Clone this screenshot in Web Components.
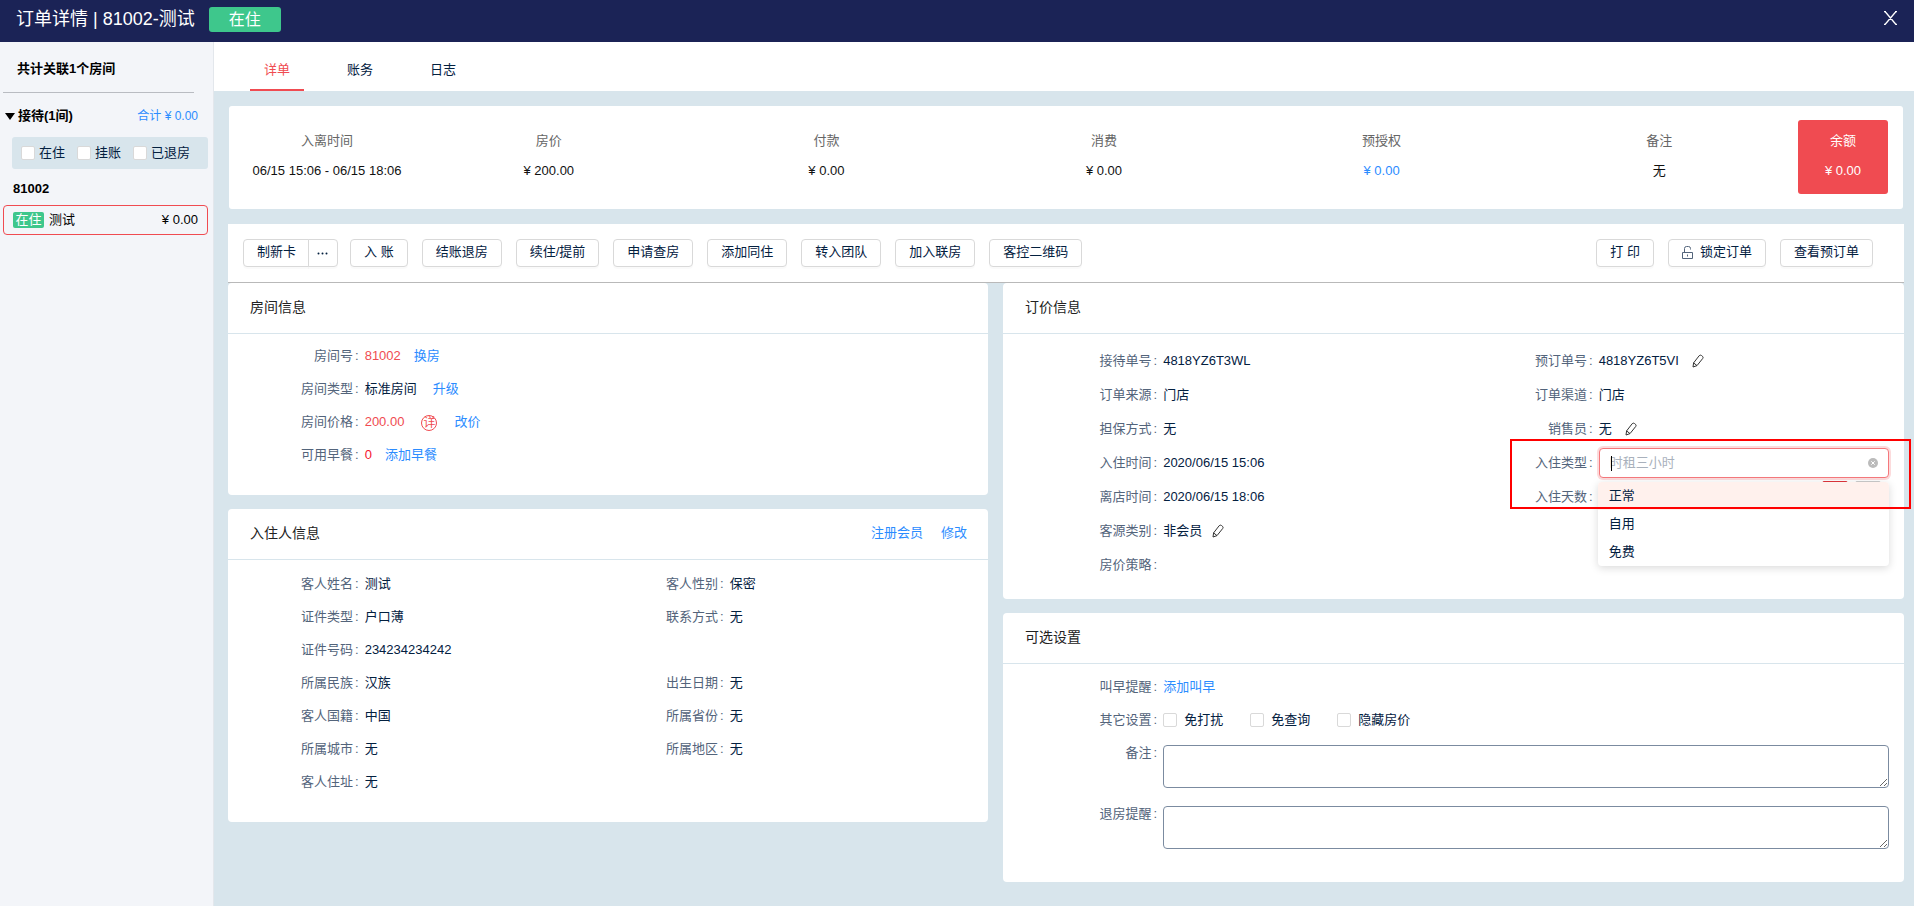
<!DOCTYPE html>
<html lang="zh-CN">
<head>
<meta charset="utf-8">
<meta name="viewport" content="width=device-width, initial-scale=1">
<title>订单详情</title>
<style>
html {
  --navy: #1b2356;
  --red: #f04b51;
  --green: #3ec78c;
  --blue: #2b8cff;
  --ink: #03203f;
  --label: #53647b;
  --pale: #d8e5ec;
  --side: #f3f5f9;
}
body {
  margin: 0;
  font: 13px/20px "Liberation Sans", "Noto Sans CJK SC", sans-serif;
  color: var(--ink);
}
</style>
</head>
<body>
<order-page></order-page>
<script>
const BASE = `
  *, *::before, *::after { box-sizing: border-box; }
  a { color: var(--blue); text-decoration: none; white-space: nowrap; }
  button { font: inherit; color: inherit; margin: 0; cursor: pointer; }
  input[type=checkbox] {
    appearance: none; flex: none; width: 14px; height: 14px; margin: 0;
    background: #fff; border: 1px solid #d9d9d9; border-radius: 2px;
  }
`;
function define(tag, css, html) {
  const tpl = document.createElement('template');
  tpl.innerHTML = `<style>${BASE}${css}</style>${html}`;
  customElements.define(tag, class extends HTMLElement {
    constructor() {
      super();
      this.attachShadow({ mode: 'open' }).append(tpl.content.cloneNode(true));
    }
  });
}

/* ---------- top bar ---------- */
define('order-header', `
  :host { display: flex; align-items: center; height: 42px; padding: 0 17px 0 16px; background: var(--navy); color: #fff; }
  h1 { margin: 0; font-size: 18px; font-weight: 400; line-height: 38px; padding-bottom: 4px; white-space: nowrap; }
  span { margin: 0 auto 3px 14px; width: 72px; font-size: 16px; line-height: 25px; text-align: center; background: var(--green); border-radius: 3px; }
  button { display: flex; padding: 0; margin-bottom: 6px; background: none; border: 0; }
`, `
  <h1>订单详情 | 81002-测试</h1>
  <span>在住</span>
  <button type="button" aria-label="关闭"><svg width="13" height="14" viewBox="0 0 13 14"><path d="M1 .5 12 13.500M12 .5 1 13.500M0 .5H2M11 .5H13M0 13.500H2M11 13.500H13" fill="none" stroke="#fff" stroke-width="1.300"/></svg></button>
`);

/* ---------- related rooms ---------- */
define('room-sidebar', `
  :host { display: block; width: 214px; flex: none; background: var(--side); border-right: 1px solid #e3e7ec; color: #000; }
  h2 { margin: 0 19px 0 3px; padding: 3px 14px 0; font-size: 13px; line-height: 47px; border-bottom: 1px solid #b9bcc2; }
  .group { display: flex; align-items: center; padding: 2px 15px 0 5px; height: 44px; }
  .group b { flex: 1; margin-left: 3px; }
  .group span { font-size: 12px; color: var(--blue); }
  .filter { display: flex; align-items: center; gap: 12px; height: 32px; margin: 0 5px 0 12px; padding-left: 9px; background: var(--pale); border-radius: 3px; color: var(--ink); }
  .filter label { display: flex; align-items: center; gap: 4px; }
  h3 { margin: 0; padding: 2px 0 0 13px; font-size: 13px; height: 36px; line-height: 36px; }
  .guest { display: flex; align-items: center; height: 30px; margin: 0 5px 0 3px; padding: 0 9px; border: 1px solid var(--red); border-radius: 4px; }
  .guest em { font-style: normal; width: 31px; line-height: 16px; text-align: center; color: #fff; background: var(--green); border-radius: 2px; }
  .guest span { flex: 1; margin-left: 5px; }
`, `
  <h2>共计关联1个房间</h2>
  <div class="group">
    <svg width="10" height="7" viewBox="0 0 10 7"><path d="M0 0H10L5 7Z"/></svg>
    <b>接待(1间)</b><span>合计 ¥ 0.00</span>
  </div>
  <div class="filter">
    <label><input type="checkbox">在住</label>
    <label><input type="checkbox">挂账</label>
    <label><input type="checkbox">已退房</label>
  </div>
  <h3>81002</h3>
  <div class="guest"><em>在住</em><span>测试</span>¥ 0.00</div>
`);

/* ---------- tabs ---------- */
define('order-tabs', `
  :host { display: flex; gap: 29px; height: 49px; padding-left: 36px; background: #fff; }
  button { padding: 8px 14px 0; line-height: 38px; background: none; border: 0; border-bottom: 2px solid transparent; }
  [aria-selected=true] { color: var(--red); border-color: var(--red); }
`, `
  <button type="button" role="tab" aria-selected="true">详单</button>
  <button type="button" role="tab" aria-selected="false">账务</button>
  <button type="button" role="tab" aria-selected="false">日志</button>
`);

/* ---------- money summary ---------- */
define('order-summary', `
  :host { display: grid; grid-template-columns: 166px repeat(5, 1fr) 90px; margin: 0 1px; padding: 14px 15px 15px; background: #fff; border-radius: 3px; text-align: center; line-height: 30px; color: #111; }
  dl { margin: 0; padding: 6px 0 8px; white-space: nowrap; }
  dt { color: #666; }
  dd { margin: 0; }
  .balance, .balance dt { color: #fff; }
  .balance { background: var(--red); border-radius: 3px; }
`, `
  <dl><dt>入离时间</dt><dd>06/15 15:06 - 06/15 18:06</dd></dl>
  <dl><dt>房价</dt><dd>¥ 200.00</dd></dl>
  <dl><dt>付款</dt><dd>¥ 0.00</dd></dl>
  <dl><dt>消费</dt><dd>¥ 0.00</dd></dl>
  <dl><dt>预授权</dt><dd><a href="#">¥ 0.00</a></dd></dl>
  <dl><dt>备注</dt><dd>无</dd></dl>
  <dl class="balance"><dt>余额</dt><dd>¥ 0.00</dd></dl>
`);

/* ---------- actions ---------- */
define('order-actions', `
  :host { display: flex; align-items: center; gap: 14px; height: 59px; padding: 0 31px 0 15px; background: #fff; border-bottom: 1px solid #b9b9b9; }
  button { display: flex; align-items: center; justify-content: center; gap: 7px; height: 28px; padding: 0 13px 2px; background: #fff; border: 1px solid #d9d9d9; border-radius: 4px; box-shadow: 0 2px 0 rgba(0,0,0,.02); white-space: nowrap; }
  .pair { display: flex; margin-right: -2px; }
  .pair button:first-child { padding: 0 12px 2px 13px; border-radius: 4px 0 0 4px; }
  .pair button:last-child { border-radius: 0 4px 4px 0; margin-left: -1px; padding: 0 8px 0 7px; }
  .push { margin-left: auto; }
`, `
  <div class="pair">
    <button type="button">制新卡</button>
    <button type="button" aria-label="更多"><svg width="13" height="3" viewBox="0 0 13 3" fill="#03203f"><circle cx="2.500" cy="1.500" r="1"/><circle cx="6.500" cy="1.500" r="1"/><circle cx="10.500" cy="1.500" r="1"/></svg></button>
  </div>
  <button type="button">入 账</button>
  <button type="button">结账退房</button>
  <button type="button">续住/提前</button>
  <button type="button">申请查房</button>
  <button type="button">添加同住</button>
  <button type="button">转入团队</button>
  <button type="button">加入联房</button>
  <button type="button">客控二维码</button>
  <button type="button" class="push">打 印</button>
  <button type="button"><svg width="11" height="13" viewBox="0 0 11 13" fill="none" stroke="#53647b"><path d="M.5 6.500H10.500V12.500H.5ZM2.500 6.500V2.500Q2.500.5 4.500.5H6.500Q8.500.5 8.500 2.500V3.500M5.500 8.500V10.500"/></svg>锁定订单</button>
  <button type="button">查看预订单</button>
`);

/* ---------- white card with a titled head ---------- */
define('info-card', `
  :host { display: block; background: #fff; border-radius: 4px; }
  header { display: flex; align-items: center; height: 51px; padding: 0 21px 2px 22px; border-bottom: 1px solid var(--pale); }
  h2 { flex: 1; margin: 0; font-size: 14px; font-weight: 400; color: #222; }
  .extra { display: flex; gap: 18px; }
  .body { display: grid; grid-template-columns: 1fr 1fr; padding: var(--body-pad); }
`, `
  <header><h2><slot name="title"></slot></h2><div class="extra"><slot name="extra"></slot></div></header>
  <div class="body"><slot></slot></div>
`);

/* ---------- label and value pair ---------- */
define('form-field', `
  :host { display: grid; grid-template-columns: 1fr 2fr; align-items: center; min-height: var(--row, 33px); min-width: 0; }
  :host([full]) { grid-column: 1 / -1; grid-template-columns: 1fr 5fr; }
  :host([area]) { align-items: start; }
  :host([area]) .name { line-height: 34px; }
  .name { text-align: right; color: var(--label); white-space: nowrap; }
  .name::after { content: ":"; margin: 0 6px 0 2px; }
  .value { display: flex; align-items: center; gap: var(--gap, 13px); min-width: 0; white-space: nowrap; }
`, `
  <div class="name"><slot name="label"></slot></div>
  <div class="value"><slot></slot></div>
`);

define('edit-button', `
  :host { display: inline-flex; }
  button { display: flex; padding: 0; border: 0; background: none; }
`, `
  <button type="button" aria-label="编辑"><svg width="12" height="14" viewBox="0 0 12 14" fill="none" stroke="#333" stroke-linejoin="round"><path d="M1 13 1.600 8.900 7.200 1.700Q8.200.6 9.500 1.500L10.500 2.300Q11.600 3.200 10.700 4.500L5 11.600ZM1.600 8.900 5 11.600"/></svg></button>
`);

/* ---------- open stay-type combo box ---------- */
define('type-select', `
  :host { display: block; position: relative; flex: 1; height: 30px; z-index: 2; }
  input { display: block; width: 100%; height: 30px; padding: 0 30px 2px 10px; font: inherit; color: var(--ink); background: #fff; border: 1px solid #f5787c; border-radius: 4px; outline: 0; box-shadow: 0 0 0 2px rgba(240,75,81,.2); }
  input::placeholder { color: #a9b1bc; opacity: 1; }
  .caret { position: absolute; left: 12px; top: 8px; width: 1px; height: 15px; background: #000; }
  .clear { position: absolute; right: 11px; top: 10px; display: flex; padding: 0; border: 0; background: none; }
  ul { position: absolute; left: -1px; right: 0; top: 34px; margin: 0; padding: 0; list-style: none; background: #fff; border-radius: 4px; box-shadow: 0 2px 8px rgba(0,0,0,.15); overflow: hidden; }
  li { padding: 0 11px 1px; line-height: 27px; }
  li[aria-selected=true] { background: #fff1ed; }
`, `
  <input type="text" role="combobox" aria-expanded="true" aria-controls="types" aria-label="入住类型" placeholder="时租三小时">
  <span class="caret"></span>
  <button type="button" class="clear" aria-label="清除"><svg width="10" height="10" viewBox="0 0 10 10"><circle cx="5" cy="5" r="5" fill="#bbb"/><path d="M3.300 3.300 6.700 6.700M6.700 3.300 3.300 6.700" stroke="#fff"/></svg></button>
  <ul id="types" role="listbox">
    <li role="option" aria-selected="true">正常</li>
    <li role="option" aria-selected="false">自用</li>
    <li role="option" aria-selected="false">免费</li>
  </ul>
`);

/* ---------- cards ---------- */
const f = (label, value, attrs = '') => `<form-field ${attrs}><span slot="label">${label}</span>${value}</form-field>`;

define('room-info', `
  :host { display: block; --body-pad: 5px 15px 24px; }
  form-field { grid-column: 1; }
  .red { color: var(--red); }
  .zero { color: #f5132d; }
  .mid { --gap: 16px; }
  .far { --gap: 17px; }
  .detail { display: grid; place-items: center; width: 16px; height: 16px; padding: 0; margin-top: 3px; font-size: 12px; line-height: 14px; color: var(--red); background: none; border: 1px solid var(--red); border-radius: 50%; }
`, `<info-card><span slot="title">房间信息</span>
  ${f('房间号', '<span class="red">81002</span><a href="#">换房</a>')}
  ${f('房间类型', '<span>标准房间</span><a href="#">升级</a>', 'class="mid"')}
  ${f('房间价格', '<span class="red">200.00</span><button type="button" class="detail">详</button><a href="#">改价</a>', 'class="far"')}
  ${f('可用早餐', '<span class="zero">0</span><a href="#">添加早餐</a>')}
</info-card>`);

define('guest-info', `
  :host { display: block; --body-pad: 7px 15px 24px; }
  .first { grid-column: 1; }
`, `<info-card><span slot="title">入住人信息</span>
  <a href="#" slot="extra">注册会员</a><a href="#" slot="extra">修改</a>
  ${f('客人姓名', '测试')}${f('客人性别', '保密')}
  ${f('证件类型', '户口薄')}${f('联系方式', '无')}
  ${f('证件号码', '234234234242', 'class="first"')}
  ${f('所属民族', '汉族', 'class="first"')}${f('出生日期', '无')}
  ${f('客人国籍', '中国')}${f('所属省份', '无')}
  ${f('所属城市', '无')}${f('所属地区', '无')}
  ${f('客人住址', '无', 'class="first"')}
</info-card>`);

define('price-info', `
  :host { display: block; --row: 34px; --body-pad: 10px 15px 17px; }
  .first { grid-column: 1; }
  .near { --gap: 10px; }
  .stay { position: relative; z-index: 1; }
  .mark { position: absolute; left: 56px; right: -22px; top: -7px; height: 70px; border: 2px solid #f00; z-index: 3; pointer-events: none; }
  .step { width: 26px; height: 32px; background: #fff; border: 1px solid #ccc; border-radius: 2px; }
  .minus { margin-left: auto; border-color: #e0363c; }
  .plus { margin: 0 8px 0 -6px; }
`, `<info-card><span slot="title">订价信息</span>
  ${f('接待单号', '4818YZ6T3WL')}${f('预订单号', '4818YZ6T5VI<edit-button></edit-button>')}
  ${f('订单来源', '门店')}${f('订单渠道', '门店')}
  ${f('担保方式', '无')}${f('销售员', '无<edit-button></edit-button>')}
  ${f('入住时间', '2020/06/15 15:06')}
  ${f('入住类型', '<type-select></type-select><span class="mark"></span>', 'class="stay"')}
  ${f('离店时间', '2020/06/15 18:06')}
  ${f('入住天数', '<button type="button" class="step minus" aria-label="减少"></button><button type="button" class="step plus" aria-label="增加"></button>')}
  ${f('客源类别', '非会员<edit-button></edit-button>', 'class="first near"')}
  ${f('房价策略', '', 'class="first"')}
</info-card>`);

define('option-info', `
  :host { display: block; --body-pad: 6px 15px 24px; }
  .checks { --gap: 27px; }
  .checks label { display: flex; align-items: center; gap: 7px; }
  textarea { display: block; flex: 1; height: 43px; margin: 9px 0; padding: 4px 10px; font: inherit; background: #fff; border: 1px solid #7b8ba0; border-radius: 4px; resize: vertical; }
`, `<info-card><span slot="title">可选设置</span>
  ${f('叫早提醒', '<a href="#">添加叫早</a>', 'full')}
  ${f('其它设置', '<label><input type="checkbox">免打扰</label><label><input type="checkbox">免查询</label><label><input type="checkbox">隐藏房价</label>', 'full class="checks"')}
  <form-field full area><label slot="label" for="remark">备注</label><textarea id="remark"></textarea></form-field>
  <form-field full area><label slot="label" for="leave">退房提醒</label><textarea id="leave"></textarea></form-field>
</info-card>`);

/* ---------- page ---------- */
define('order-page', `
  :host { display: flex; flex-direction: column; min-height: 100vh; }
  .shell { display: flex; flex: 1; }
  .main { flex: 1; min-width: 0; background: var(--pale); }
  .content { padding: 15px 10px 24px 14px; }
  order-actions { margin-top: 15px; }
  .cols { display: grid; grid-template-columns: 760fr 901fr; gap: 15px; align-items: start; }
  .col { display: grid; gap: 14px; }
`, `
  <order-header></order-header>
  <div class="shell">
    <room-sidebar></room-sidebar>
    <div class="main">
      <order-tabs role="tablist"></order-tabs>
      <div class="content">
        <order-summary></order-summary>
        <order-actions></order-actions>
        <div class="cols">
          <div class="col"><room-info></room-info><guest-info></guest-info></div>
          <div class="col"><price-info></price-info><option-info></option-info></div>
        </div>
      </div>
    </div>
  </div>
`);
</script>
</body>
</html>
